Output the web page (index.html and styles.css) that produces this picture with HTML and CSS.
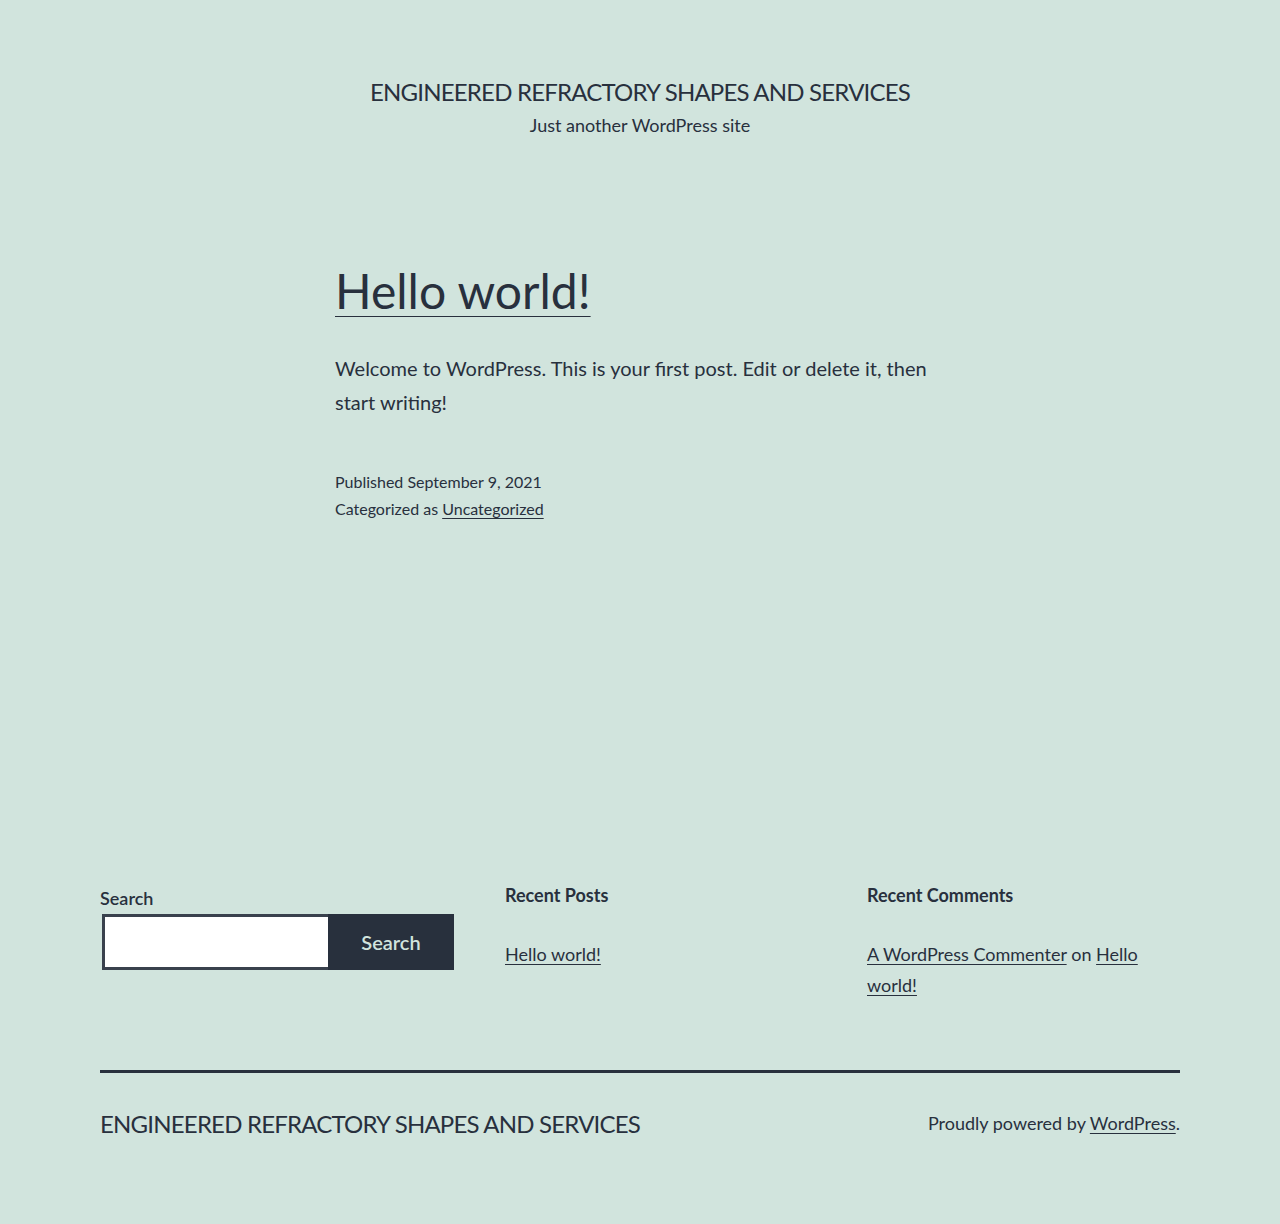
FILE: index.html
```html
<!DOCTYPE html>
<html lang="en">
<head>
<meta charset="utf-8">
<title>Engineered Refractory Shapes and Services</title>
<link rel="stylesheet" href="styles.css">
</head>
<body>
<div class="site">
  <header class="site-header">
    <p class="site-title">Engineered Refractory Shapes and Services</p>
    <p class="site-description">Just another WordPress site</p>
  </header>

  <main class="site-main">
    <article class="post">
      <h2 class="entry-title"><a href="#">Hello world!</a></h2>
      <div class="entry-content">
        <p>Welcome to WordPress. This is your first post. Edit or delete it, then start writing!</p>
      </div>
      <footer class="entry-meta">
        <span class="meta-line">Published September 9, 2021</span>
        <span class="meta-line">Categorized as <a href="#">Uncategorized</a></span>
      </footer>
    </article>
  </main>

  <aside class="widget-area">
    <section class="widget widget-search">
      <form class="search-form">
        <label class="search-label" for="s">Search</label>
        <div class="search-row">
          <input class="search-input" id="s" type="search">
          <button class="search-button" type="button">Search</button>
        </div>
      </form>
    </section>
    <section class="widget">
      <h2 class="widget-title">Recent Posts</h2>
      <ul class="widget-list">
        <li><a href="#">Hello world!</a></li>
      </ul>
    </section>
    <section class="widget">
      <h2 class="widget-title">Recent Comments</h2>
      <ul class="widget-list">
        <li><a href="#">A WordPress Commenter</a> on <a href="#">Hello world!</a></li>
      </ul>
    </section>
  </aside>

  <footer class="site-footer">
    <p class="footer-title">Engineered Refractory Shapes and Services</p>
    <p class="powered">Proudly powered by <a href="#">WordPress</a>.</p>
  </footer>
</div>
</body>
</html>
```

FILE: styles.css
```css
html, body {
  margin: 0;
  padding: 0;
}
body {
  background: #d1e4dd;
  color: #28303d;
  font-family: "Lato", "Open Sans", sans-serif;
  font-size: 20px;
  line-height: 1.7;
}
a {
  color: #28303d;
  text-decoration: underline;
  text-decoration-thickness: 1px;
  text-underline-offset: 3px;
}
.site {
  min-height: 1224px;
  box-sizing: border-box;
}
.site-header {
  padding-top: 76px;
  text-align: center;
}
.site-title {
  margin: 0;
  font-size: 24px;
  line-height: 1.3;
  text-transform: uppercase;
  letter-spacing: -0.8px;
}
.site-description {
  margin: 6px 0 0;
  font-size: 18px;
  line-height: 1.4;
}
.site-main {
  width: 610px;
  margin: 122px auto 0;
}
.entry-title {
  margin: 0;
  font-size: 48px;
  font-weight: 400;
  line-height: 1.3;
}
.entry-title a {
  text-underline-offset: 7px;
}
.entry-content p {
  margin: 28px 0 0;
  font-size: 20px;
  line-height: 34px;
}
.entry-meta {
  margin-top: 49px;
  font-size: 16px;
  line-height: 27px;
  display: flex;
  flex-direction: column;
}
.widget-area {
  width: 1080px;
  margin: 362px auto 0;
  display: grid;
  grid-template-columns: 355px 312px 313px;
  column-gap: 50px;
}
.search-label {
  display: block;
  margin-top: 3px;
  font-size: 18px;
  font-weight: 600;
  line-height: 23px;
}
.search-row {
  display: flex;
  margin: 4px 0 0 2px;
  height: 56px;
}
.search-input {
  box-sizing: border-box;
  width: 226px;
  height: 56px;
  margin: 0;
  border: 3px solid #39414d;
  border-right: 0;
  background: #fff;
  border-radius: 0;
  outline: none;
}
.search-button {
  box-sizing: border-box;
  width: 126px;
  height: 56px;
  margin: 0;
  border: 0;
  border-radius: 0;
  background: #28303d;
  color: #d1e4dd;
  font-family: inherit;
  font-size: 20px;
  font-weight: 600;
  cursor: pointer;
}
.widget-title {
  margin: 0;
  font-size: 18px;
  font-weight: 700;
  line-height: 23px;
}
.widget-list {
  list-style: none;
  margin: 32px 0 0;
  padding: 0;
  font-size: 18px;
  line-height: 31px;
}
.site-footer {
  width: 1080px;
  margin: 69px auto 0;
  border-top: 3px solid #28303d;
  padding-top: 35px;
  display: flex;
  justify-content: space-between;
  align-items: center;
}
.footer-title {
  margin: 0;
  font-size: 24px;
  line-height: 1.3;
  text-transform: uppercase;
  letter-spacing: -0.8px;
}
.powered {
  margin: 0;
  font-size: 18px;
  line-height: 1.7;
}
```
